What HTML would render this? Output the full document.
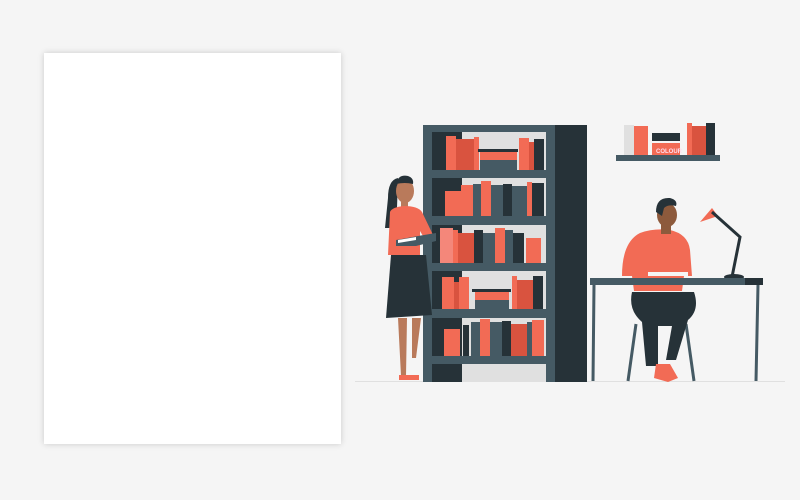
<!DOCTYPE html>
<html><head><meta charset="utf-8"><style>
html,body{margin:0;padding:0;width:800px;height:500px;background:#f5f5f5;overflow:hidden}
.card{position:absolute;left:44px;top:53px;width:297px;height:391px;background:#fff;box-shadow:0 0 6px rgba(0,0,0,0.18)}
svg{position:absolute;left:0;top:0}
</style></head><body>
<div class="card"></div>
<svg width="800" height="500" viewBox="0 0 800 500">
<line x1="355" y1="381.5" x2="785" y2="381.5" stroke="#e0e0e0" stroke-width="1"/>
<rect x="423" y="125" width="135" height="257" fill="#455a64"/>
<rect x="555" y="125" width="32" height="257" fill="#263238"/>
<g fill="#e0e0e0">
<rect x="432" y="132" width="114" height="38"/><rect x="432" y="178" width="114" height="38"/>
<rect x="432" y="225" width="114" height="38"/><rect x="432" y="271" width="114" height="38"/>
<rect x="432" y="318" width="114" height="38"/><rect x="432" y="364" width="114" height="18"/>
</g>
<g fill="#263238">
<rect x="432" y="132" width="30" height="38"/><rect x="432" y="178" width="30" height="38"/>
<rect x="432" y="225" width="30" height="38"/><rect x="432" y="271" width="30" height="38"/>
<rect x="432" y="318" width="30" height="38"/><rect x="432" y="364" width="30" height="18"/>
</g>
<rect x="446" y="136" width="10" height="34" fill="#f26b55"/><rect x="456" y="139" width="18" height="31" fill="#d9533f"/><rect x="474" y="137" width="5" height="33" fill="#f26b55"/>
<rect x="480" y="151" width="37" height="9" fill="#f26b55"/><rect x="478" y="149" width="40" height="3" fill="#263238"/><rect x="480" y="160" width="37" height="10" fill="#455a64"/>
<rect x="519" y="138" width="10" height="32" fill="#f26b55"/><rect x="529" y="142" width="5" height="28" fill="#d9533f"/><rect x="534" y="139" width="10" height="31" fill="#263238"/>
<rect x="445" y="191" width="16" height="25" fill="#f26b55"/><rect x="461" y="185" width="12" height="31" fill="#f26b55"/><rect x="473" y="184" width="8" height="32" fill="#455a64"/>
<rect x="481" y="181" width="10" height="35" fill="#f26b55"/><rect x="491" y="185" width="12" height="31" fill="#455a64"/><rect x="503" y="184" width="9" height="32" fill="#263238"/>
<rect x="512" y="186" width="15" height="30" fill="#455a64"/><rect x="527" y="182" width="5" height="34" fill="#f26b55"/><rect x="532" y="183" width="12" height="33" fill="#263238"/>
<rect x="440" y="228" width="13" height="35" fill="#f4877a"/><rect x="453" y="230" width="5" height="33" fill="#f26b55"/><rect x="458" y="233" width="16" height="30" fill="#d9533f"/>
<rect x="474" y="230" width="9" height="33" fill="#263238"/><rect x="483" y="233" width="12" height="30" fill="#455a64"/><rect x="495" y="228" width="10" height="35" fill="#f26b55"/>
<rect x="505" y="230" width="8" height="33" fill="#455a64"/><rect x="513" y="233" width="11" height="30" fill="#263238"/><rect x="526" y="238" width="15" height="25" fill="#f26b55"/>
<rect x="442" y="277" width="12" height="32" fill="#f26b55"/><rect x="454" y="282" width="5" height="27" fill="#d9533f"/><rect x="459" y="277" width="10" height="32" fill="#f26b55"/>
<rect x="475" y="291" width="34" height="9" fill="#f26b55"/><rect x="472" y="289" width="39" height="3" fill="#263238"/><rect x="475" y="300" width="34" height="9" fill="#455a64"/>
<rect x="512" y="276" width="5" height="33" fill="#f26b55"/><rect x="517" y="280" width="16" height="29" fill="#d9533f"/><rect x="533" y="276" width="10" height="33" fill="#263238"/>
<rect x="444" y="329" width="16" height="27" fill="#f26b55"/><rect x="463" y="325" width="6" height="31" fill="#263238"/><rect x="471" y="322" width="9" height="34" fill="#455a64"/>
<rect x="480" y="319" width="10" height="37" fill="#f26b55"/><rect x="490" y="322" width="12" height="34" fill="#455a64"/><rect x="502" y="321" width="9" height="35" fill="#263238"/>
<rect x="511" y="324" width="16" height="32" fill="#d9533f"/><rect x="527" y="322" width="5" height="34" fill="#455a64"/><rect x="532" y="320" width="12" height="36" fill="#f26b55"/>
<!-- woman -->
<path d="M398 178 q-10 2 -10 20 l-3 30 l8 0 l4 -20 z" fill="#263238"/>
<ellipse cx="405" cy="191" rx="9" ry="12" fill="#b97a5b"/>
<path d="M396 184 q2 -10 12 -8 q6 2 5 8 q-8 -2 -17 0z" fill="#263238"/>
<rect x="401" y="200" width="7" height="9" fill="#b97a5b"/>
<path d="M390 212 q2 -5 14 -6 q14 0 18 6 l12 25 l-8 4 l-6 -10 l0 24 l-32 0 z" fill="#f26b55"/>
<path d="M396 240 l22 -4 l18 -3 l0 8 l-20 5 l-20 0z" fill="#455a64"/>
<path d="M398 240 l18 -3 l0 3 l-18 3z" fill="#fff"/>
<path d="M391 255 l35 0 l6 60 l-46 3 z" fill="#263238"/>
<path d="M398 318 l9 0 l-1 58 l-5 0z M412 318 l9 0 l-5 40 l-4 0z" fill="#b97a5b"/>
<rect x="399" y="375" width="20" height="5" fill="#f26b55"/>
<!-- wall shelf -->
<rect x="624" y="125" width="10" height="30" fill="#e0e0e0"/><rect x="634" y="126" width="5" height="29" fill="#f26b55"/><rect x="639" y="126" width="9" height="29" fill="#f26b55"/>
<rect x="652" y="133" width="28" height="8" fill="#263238"/><rect x="652" y="143" width="28" height="12" fill="#f26b55"/>
<text x="656" y="153" font-family="Liberation Sans, sans-serif" font-size="6" font-weight="bold" fill="#fde">COLOUR</text>
<rect x="687" y="123" width="5" height="32" fill="#f26b55"/><rect x="692" y="126" width="14" height="29" fill="#d9533f"/><rect x="706" y="123" width="9" height="32" fill="#263238"/>
<rect x="616" y="155" width="104" height="6" fill="#455a64"/>
<!-- lamp -->
<path d="M700 222 l12 -14 l6 8 z" fill="#f26b55"/>
<path d="M712 212 l28 25 l-8 40" stroke="#263238" stroke-width="3" fill="none"/>
<ellipse cx="734" cy="277" rx="10" ry="3" fill="#263238"/>
<!-- man -->
<path d="M636 324 l-8 57 M686 324 l8 57" stroke="#455a64" stroke-width="3"/>
<rect x="646" y="318" width="34" height="8" fill="#455a64"/>
<path d="M632 292 l62 0 q6 18 -6 28 l-12 40 l-10 0 l6 -34 l-14 0 l0 40 l-12 0 l-4 -44 q-14 -12 -10 -30z" fill="#263238"/>
<path d="M656 364 l14 0 l8 14 l-10 4 l-14 -4z" fill="#f26b55"/>
<path d="M640 233 q14 -5 30 -3 q18 4 20 20 l2 26 l-8 0 l-2 15 l-48 0 l-2 -15 l-10 0 q0 -34 18 -43z" fill="#f26b55"/>
<path d="M648 272 l40 0 l0 4 l-40 0z" fill="#f5f5f5"/>
<rect x="661" y="222" width="10" height="12" fill="#8d5a3c"/>
<ellipse cx="667" cy="215" rx="10" ry="12" fill="#8d5a3c"/>
<path d="M656 212 q0 -15 14 -14 q8 2 6 8 q-8 -2 -12 2 l-2 8 z" fill="#263238"/>
<rect x="590" y="278" width="173" height="7" fill="#455a64"/>
<rect x="745" y="278" width="18" height="7" fill="#263238"/>
<path d="M594 285 l-1 96 M758 285 l-2 96" stroke="#455a64" stroke-width="3"/>
</svg>
</body></html>
